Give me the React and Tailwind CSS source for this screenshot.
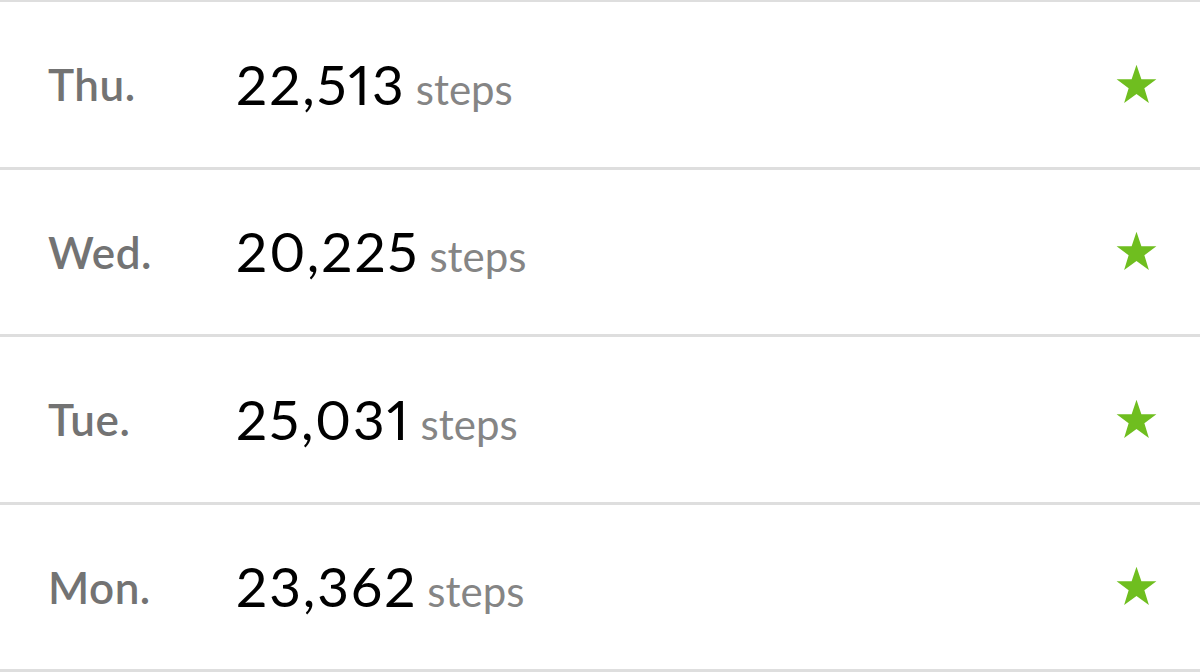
import React from 'react';

const days = [
  { day: 'Thu.', steps: '22,513' },
  { day: 'Wed.', steps: '20,225' },
  { day: 'Tue.', steps: '25,031' },
  { day: 'Mon.', steps: '23,362' },
];

const Star = () => (
  <svg viewBox="0 0 24 24" className="w-[45px] h-[45px]">
    <polygon
      points="12,1.5 14.6,9.2 22.6,9.2 16.2,14 18.6,21.8 12,17 5.4,21.8 7.8,14 1.4,9.2 9.4,9.2"
      fill="#6fbe1f"
    />
  </svg>
);

const App = () => {
  return (
    <div className="w-[1200px] h-[672px] bg-white overflow-hidden border-t-2 border-[#dedede]" style={{ fontFamily: 'Lato, "Open Sans", sans-serif' }}>
      {days.map((d) => (
        <div key={d.day} className="h-[167.5px] border-b-[3px] border-[#dedede] flex items-center pl-[48px] pr-[41px]">
          <div className="w-[188px] text-[44px] font-semibold text-[#737373] leading-none tracking-[0.5px]">{d.day}</div>
          <div className="flex items-baseline flex-1 leading-none proportional-nums">
            <span className="text-[55px] text-black tracking-[2px]">{d.steps}</span>
            <span className="text-[42px] text-[#858585] ml-[10px]">steps</span>
          </div>
          <Star />
        </div>
      ))}
    </div>
  );
};

export default App;
